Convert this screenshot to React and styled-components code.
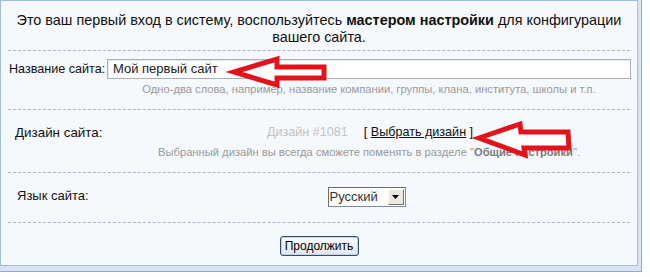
import React from "react";
import styled, { createGlobalStyle } from "styled-components";

const Global = createGlobalStyle`
  html, body { margin: 0; padding: 0; background: #fdfeff; }
  body { font-family: "Liberation Sans", Arial, sans-serif; }
`;

const Frame = styled.div`
  display: inline-block;
  background: #d6e4f5;
  border-right: 1px solid #9aa7b8;
  border-bottom: 1px solid #9aa7b8;
  padding: 0 3px 5px 0;
`;

const Panel = styled.div`
  position: relative;
  width: 636px;
  height: 264px;
  background: #f5f8fd;
  border: 1px solid #9dbde2;
  display: flex;
  flex-direction: column;
`;

const Intro = styled.p`
  margin: 0;
  height: 49px;
  padding-top: 11px;
  box-sizing: border-box;
  text-align: center;
  font-size: 14.4px;
  line-height: 17px;
  color: #111;
  b { font-weight: bold; }
`;

const Divider = styled.hr`
  margin: 0 7px;
  border: 0;
  border-top: 1px dashed #a8b6c9;
  height: 0;
`;

const Row = styled.div`
  display: grid;
  grid-template-columns: 106px 524px;
  height: ${(p) => p.$h}px;
  box-sizing: border-box;
  padding-top: ${(p) => p.$top}px;
  align-content: start;
`;

const Label = styled.div`
  padding-left: ${(p) => p.$indent}px;
  padding-top: ${(p) => p.$dy}px;
  font-size: ${(p) => p.$size || 13}px;
  color: #111;
  white-space: nowrap;
`;

const Field = styled.div`
  display: flex;
  flex-direction: column;
  align-items: center;
  gap: ${(p) => p.$gap || 0}px;
`;

const TextInput = styled.div`
  align-self: stretch;
  height: 18px;
  border: 1px solid #a9b0ba;
  background: #fff;
  box-shadow: inset 1px 1px 1px #e2e6eb;
  font-size: 13px;
  line-height: 18px;
  padding-left: 5px;
  color: #222;
`;

const Hint = styled.div`
  font-size: 11.2px;
  color: #9a9a9a;
  margin-top: ${(p) => p.$mt || 0}px;
  b { color: #7c7c7c; }
`;

const DesignLine = styled.div`
  display: flex;
  gap: 16px;
  font-size: 12.6px;
  align-items: baseline;
  margin-left: 2px;
`;

const Muted = styled.span`
  color: #c2c2c2;
`;

const LinkWrap = styled.span`
  color: #111;
  a { color: #111; text-decoration: underline; }
`;

const Select = styled.div`
  display: flex;
  width: 76px;
  height: 18px;
  margin-right: 5px;
  border: 1px solid #7f8aa0;
  border-top-color: #6c6c6c;
  border-left-color: #6c6c6c;
  background: #fff;
  font-size: 13px;
  line-height: 18px;
  color: #333;
`;

const SelectText = styled.span`
  flex: 1;
  padding-left: 1px;
`;

const SelectBtn = styled.span`
  width: 14px;
  height: 14px;
  margin: 1px 1px 0 0;
  background: #ece9e2;
  border: 1px solid #fff;
  border-right-color: #6f6f6f;
  border-bottom-color: #6f6f6f;
  display: flex;
  align-items: center;
  justify-content: center;
`;

const Footer = styled.div`
  flex: 1;
  display: flex;
  justify-content: center;
  padding-top: 13px;
`;

const Button = styled.button`
  height: 20px;
  width: 79px;
  padding: 0;
  font-family: inherit;
  font-size: 12px;
  color: #000;
  background: linear-gradient(#fdfdfe, #dfe6ef);
  border: 1px solid #2d4d75;
  border-radius: 3px;
  box-shadow: inset 0 0 0 1px #c4d2e4;
`;

const Arrow = styled.svg`
  position: absolute;
  left: -1px;
  top: -1px;
  pointer-events: none;
`;

export default function App() {
  return (
    <>
      <Global />
      <Frame>
        <Panel>
          <Intro>
            Это ваш первый вход в систему, воспользуйтесь <b>мастером настройки</b> для конфигурации
            <br />
            вашего сайта.
          </Intro>
          <Divider />
          <Row $h={58} $top={8}>
            <Label $indent={8} $dy={3} $size={12.6}>Название сайта:</Label>
            <Field>
              <TextInput>Мой первый сайт</TextInput>
              <Hint $mt={4}>Одно-два слова, например, название компании, группы, клана, института, школы и т.п.</Hint>
            </Field>
          </Row>
          <Divider />
          <Row $h={62} $top={15}>
            <Label $indent={14} $dy={0} $size={13.4}>Дизайн сайта:</Label>
            <Field $gap={7}>
              <DesignLine>
                <Muted>Дизайн #1081</Muted>
                <LinkWrap>
                  [ <a href="#">Выбрать дизайн</a> ]
                </LinkWrap>
              </DesignLine>
              <Hint>
                Выбранный дизайн вы всегда сможете поменять в разделе "<b>Общие настройки</b>".
              </Hint>
            </Field>
          </Row>
          <Divider />
          <Row $h={49} $top={14}>
            <Label $indent={16} $dy={1}>Язык сайта:</Label>
            <Field>
              <Select>
                <SelectText>Русский</SelectText>
                <SelectBtn>
                  <svg width="7" height="4" viewBox="0 0 7 4">
                    <path d="M0 0H7L3.5 4Z" fill="#000" />
                  </svg>
                </SelectBtn>
              </Select>
            </Field>
          </Row>
          <Divider />
          <Footer>
            <Button>Продолжить</Button>
          </Footer>
          <Arrow width="650" height="270" viewBox="0 0 650 270">
            <polygon
              points="234,72 277,59 277,67 324,67 324,78 277,78 277,85"
              fill="#fff"
              stroke="#e3121b"
              strokeWidth="5"
              strokeLinejoin="miter"
            />
            <polygon
              points="479,138 520,124 521,132 568,132 569,148 524,148 525,155"
              fill="#fff"
              stroke="#e3121b"
              strokeWidth="5"
              strokeLinejoin="miter"
            />
          </Arrow>
        </Panel>
      </Frame>
    </>
  );
}
